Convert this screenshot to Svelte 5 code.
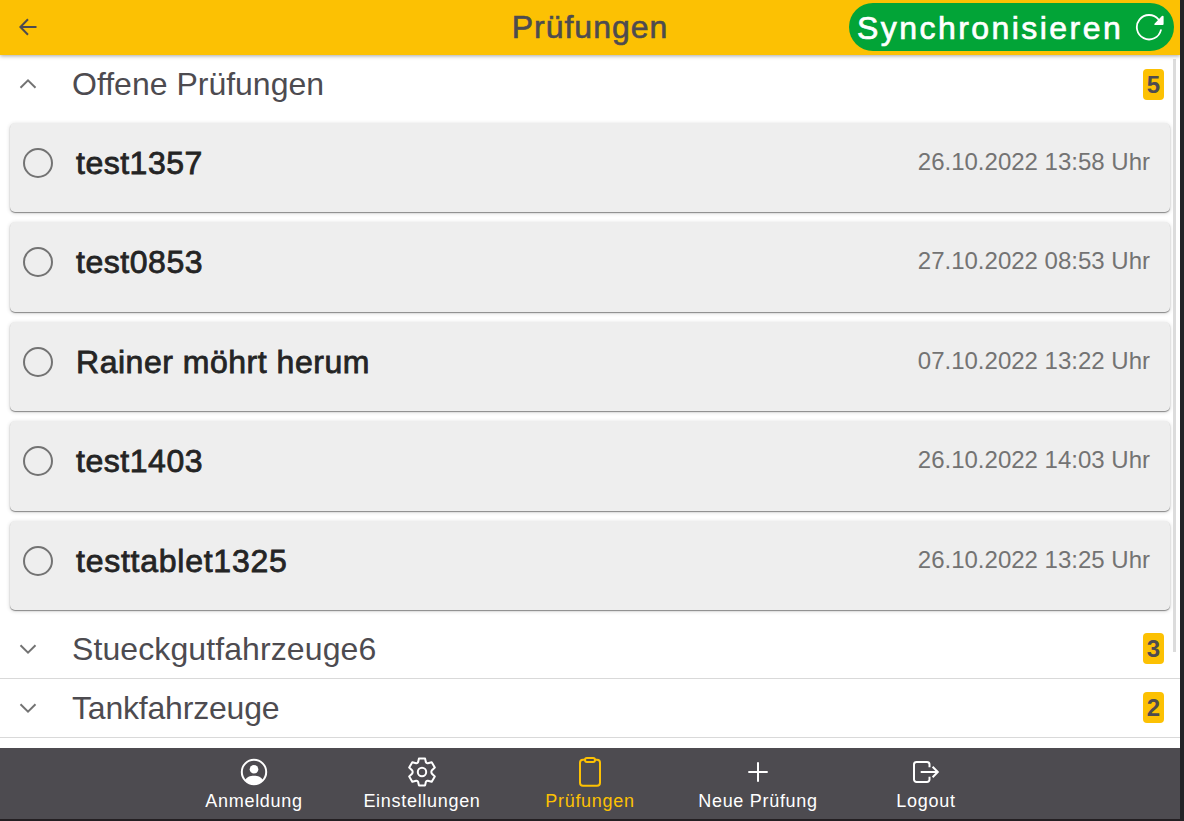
<script>
  const checks = [
    ['test1357', '26.10.2022 13:58 Uhr', 0.5],
    ['test0853', '27.10.2022 08:53 Uhr', 0.55],
    ['Rainer möhrt herum', '07.10.2022 13:22 Uhr', 0.52],
    ['test1403', '26.10.2022 14:03 Uhr', 0.55],
    ['testtablet1325', '26.10.2022 13:25 Uhr', 0.75]
  ];
  const groups = [['Stueckgutfahrzeuge6', 3, 0.1], ['Tankfahrzeuge', 2, -0.2]];
  const tabs = [
    ['Anmeldung', 'user'],
    ['Einstellungen', 'gear'],
    ['Prüfungen', 'clipboard'],
    ['Neue Prüfung', 'plus'],
    ['Logout', 'logout']
  ];
</script>

<div class="app">
  <header>
    <button class="back" aria-label="Zurück">
      <svg width="20" height="20" viewBox="0 0 20 20" fill="none" stroke="currentColor" stroke-width="2"><path d="M18.500 10H3M10 2.200L2.400 10l7.600 7.800" /></svg>
    </button>
    <h1>Prüfungen</h1>
    <button class="sync">
      <span>Synchronisieren</span>
      <svg width="30" height="30" viewBox="0 0 30 30"><path d="M23.500 7.500A12.200 12.200 0 1 0 25.900 18.100" fill="none" stroke="#fff" stroke-width="1.800" stroke-linecap="round" /><path d="M28.600 4.500v7.600q0 1-1 1h-7.500q-1.500-.2-.6-1.400l7.400-7.600q1.400-1 1.700.4z" fill="#fff" /></svg>
    </button>
  </header>
  <main>
    <section class="group open">
      <svg width="20" height="12" viewBox="0 0 20 12"><path d="M2.500 9.700L10 2.300l7.500 7.400" /></svg>
      <h2>Offene Prüfungen</h2>
      <b>5</b>
    </section>
    <div class="cards">
      {#each checks as [name, date, spacing]}
        <article>
          <i></i>
          <h3 style="letter-spacing: {spacing}px">{name}</h3>
          <time>{date}</time>
        </article>
      {/each}
    </div>
    {#each groups as [name, count, spacing]}
      <section class="group">
        <svg width="20" height="12" viewBox="0 0 20 12"><path d="M2.500 2.300L10 9.700l7.500-7.400" /></svg>
        <h2 style="letter-spacing: {spacing}px">{name}</h2>
        <b>{count}</b>
      </section>
    {/each}
    <div class="scrollbar"></div>
  </main>
  <nav>
    {#each tabs as [label, icon]}
      <button class:active={icon === 'clipboard'}>
        <svg width="32" height="32" viewBox="0 0 32 32" fill="none" stroke="currentColor" stroke-width="2">
          {#if icon === 'user'}
            <circle cx="16" cy="16" r="12.200" /><circle cx="16" cy="13.200" r="4.300" fill="currentColor" stroke="none" /><path d="M7 24.500c1.500-3.500 5-4.800 9-4.800s7.500 1.300 9 4.800c-5 4.800-13 4.800-18 0z" fill="currentColor" stroke="none" />
          {:else if icon === 'gear'}
            <circle cx="16" cy="16" r="4.200" />
            <g stroke-width="2" stroke-linejoin="round">
              <path d="M12.900 2.600h6.200l.8 3.600q.5 1.300 1.900 1.100l3.900-1.100 3.100 5.400-2.800 2.600q-1.300 1.800 0 3.600l2.800 2.600-3.100 5.400-3.900-1.100q-1.400-.2-1.900 1.100l-.8 3.600h-6.200l-.8-3.600q-.5-1.300-1.900-1.100l-3.900 1.100-3.100-5.400 2.800-2.600q1.300-1.800 0-3.600l-2.800-2.600 3.100-5.400 3.900 1.100q1.400.2 1.900-1.100z" />
            </g>
          {:else if icon === 'clipboard'}
            <rect x="6" y="3.800" width="20" height="26" rx="3" /><rect x="11" y="2.100" width="10" height="3.800" rx="1.900" fill="#4d4b50" />
          {:else if icon === 'plus'}
            <path d="M16 6.300v19.400M6.300 16h19.400" />
          {:else}
            <path d="M19.500 11.300V8.500a2.500 2.500 0 0 0-2.500-2.500H6.500A2.500 2.500 0 0 0 4 8.500v15A2.500 2.500 0 0 0 6.500 26H17a2.500 2.500 0 0 0 2.500-2.500v-2.800M10.700 16h17M22.600 10.700l5.200 5.300-5.200 5.300" />
          {/if}
        </svg>
        <span>{label}</span>
      </button>
    {/each}
  </nav>
</div>

<style>
  :global(body) { background: #222326; }
  * { box-sizing: border-box; }
  .app { width: 1180px; height: 821px; display: flex; flex-direction: column; font-family: 'Liberation Sans', Arial, sans-serif; color: #4d4b50; background: #fff; border-bottom: 2px solid #231f22; overflow: hidden; }
  button { border: 0; background: none; padding: 0; font: inherit; color: inherit; }
  h1, h2, h3 { margin: 0; font-weight: 400; }
  header { height: 55px; flex: none; display: grid; grid-template-columns: 1fr auto 1fr; align-items: center; background: #fcc103; box-shadow: 0 1px 4px rgba(0,0,0,.35); z-index: 1; padding: 0 6px 1px 18px; }
  .back, .back svg { display: block; width: 20px; height: 20px; }
  h1 { font-size: 32px; line-height: 36px; letter-spacing: .98px; -webkit-text-stroke: .6px; margin-left: -12px; }
  .sync { justify-self: end; width: 325px; height: 48px; border-radius: 24px; background: #02a437; color: #fff; display: flex; align-items: center; justify-content: space-between; padding: 0 9px 0 8px; font-size: 32px; letter-spacing: 2.450px; -webkit-text-stroke: .7px; }
  .sync span { padding-top: 2px; }
  main { position: relative; flex: 1; min-height: 0; overflow: hidden; }
  .group { height: 59px; display: flex; align-items: center; padding: 0 16px 0 18px; border-bottom: 1px solid #d9d9d9; }
  .group.open { border: 0; height: 58px; }
  .group svg { fill: none; stroke: #737373; stroke-width: 2; }
  .group h2 { flex: 1; margin-left: 34px; font-size: 32px; line-height: 38px; }
  b { width: 21px; height: 31px; border-radius: 4px; background: #fcc103; font-size: 24px; line-height: 31px; text-align: center; }
  .cards { display: flex; flex-direction: column; gap: 10px; padding: 9.900px 10px 9.600px; }
  article { height: 89.500px; display: flex; align-items: flex-start; padding: 19.800px 20px 0 13px; background: #eee; border-radius: 5px; box-shadow: 0 1px 1px rgba(0,0,0,.4), 0 1px 4px rgba(0,0,0,.18); }
  i { width: 30px; height: 30px; border: 2px solid #737373; border-radius: 50%; margin-top: 5.300px; }
  h3 { flex: 1; margin-left: 23px; font-size: 32px; line-height: 40px; color: #242424; -webkit-text-stroke: .8px; }
  time { font-size: 24px; line-height: 38px; color: #737373; }
  .scrollbar { position: absolute; right: 4px; top: 4px; width: 3px; height: 593px; background: #dcdcdc; }
  nav { height: 71px; flex: none; display: flex; justify-content: center; background: #4d4b50; color: #fff; }
  nav button { width: 168px; display: flex; flex-direction: column; align-items: center; padding-top: 8px; font-size: 18px; letter-spacing: .7px; }
  nav svg { display: block; }
  nav span { line-height: 26px; }
  .active { color: #fcc103; }
</style>
